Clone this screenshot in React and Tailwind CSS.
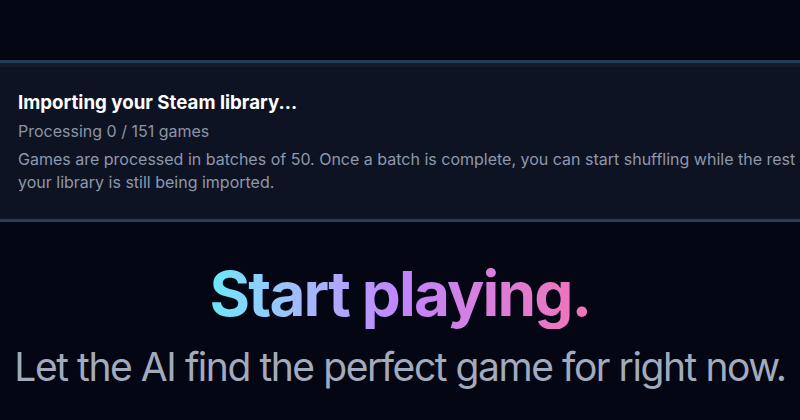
import React from 'react';

const App = () => {
  return (
    <div
      className="w-[800px] h-[420px] overflow-hidden bg-[#040713] flex flex-col"
      style={{ fontFamily: 'Inter, "Noto Sans", sans-serif' }}
    >
      {/* import progress card, wider than the window like the reference */}
      <div className="mt-[60px] w-[960px] shrink-0 border-t-[3px] border-b-[3px] border-t-[#223e56] border-b-[#1f4258] bg-[#0e1323]">
        <div className="h-[4px] bg-[#141b2d]" />
        <div className="px-[18px] pt-[23px] pb-[25px]">
          <h2 className="text-[18.7px] leading-[26px] font-bold text-white">
            Importing your Steam library...
          </h2>
          <p className="mt-[3px] text-[16px] leading-[24px] text-[#8c94a3]">Processing 0 / 151 games</p>
          <p className="mt-[5px] text-[16px] leading-[23px] text-[#8d98ad] whitespace-nowrap">
            Games are processed in batches of 50. Once a batch is complete, you can start shuffling while the rest of
            <br />
            your library is still being imported.
          </p>
        </div>
      </div>

      {/* hero */}
      <div className="flex flex-col items-center pt-[37px]">
        <h1 className="text-[62px] leading-[70px] font-bold tracking-[-0.03em] bg-gradient-to-r from-[#67e8f9] via-[#c084fc] to-[#f472b6] bg-clip-text text-transparent">
          Start playing.
        </h1>
        <p className="mt-[15px] text-[39px] leading-[46px] tracking-[-0.037em] text-[#a1abbd] whitespace-nowrap">
          Let the AI find the perfect game for right now.
        </p>
      </div>
    </div>
  );
};

export default App;
